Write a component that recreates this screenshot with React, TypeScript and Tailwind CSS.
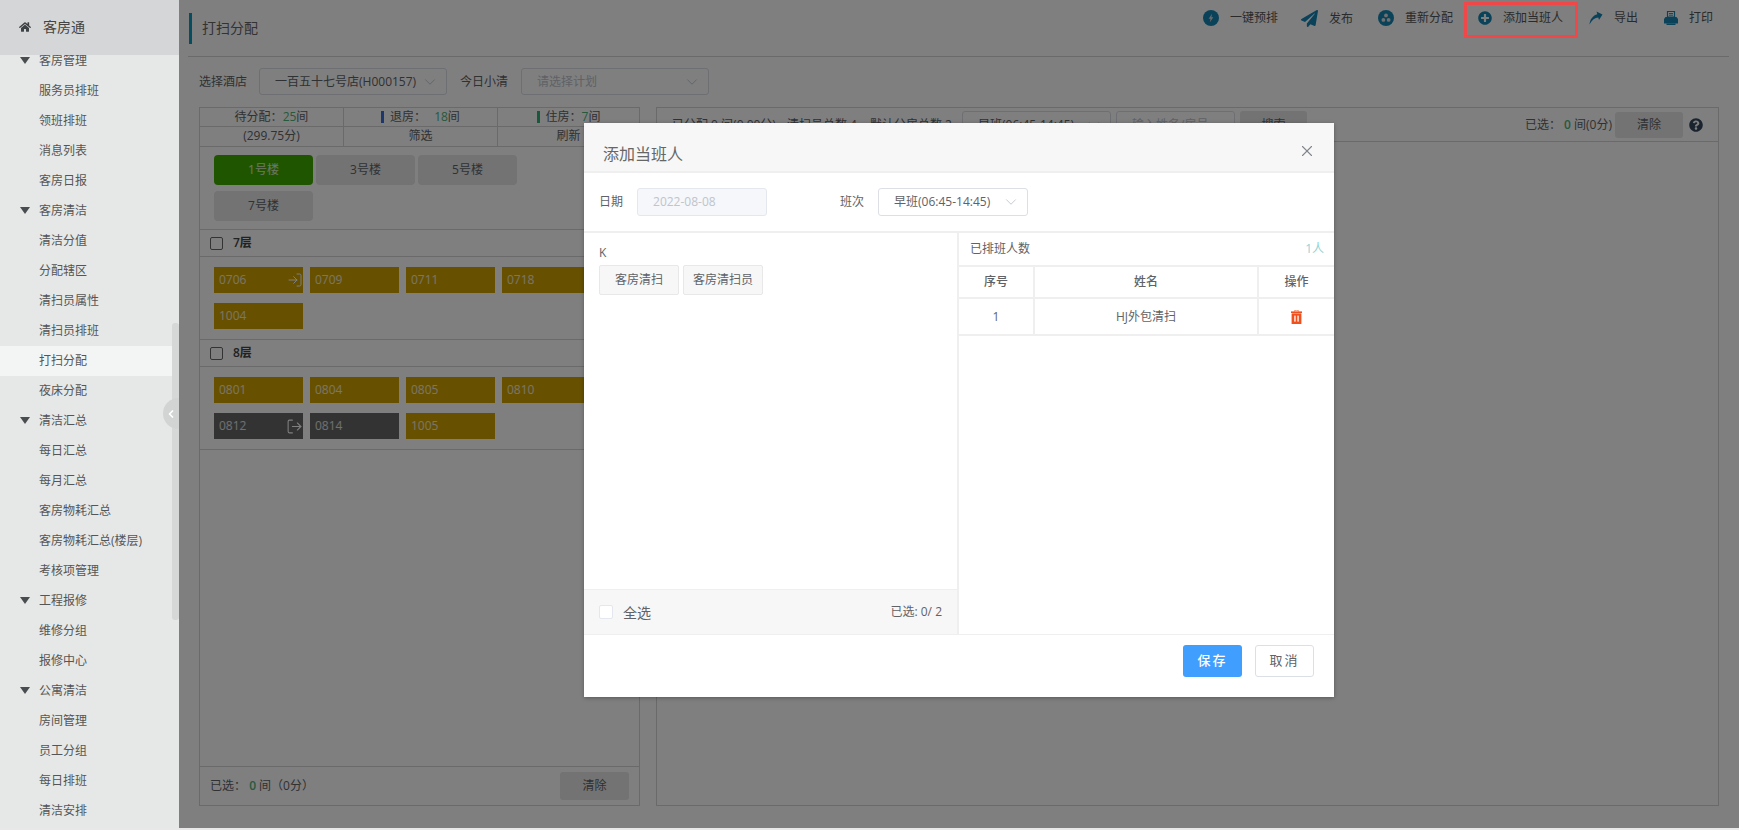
import React from "react";
import { ChevronDown, ChevronLeft, LogIn, LogOut, X } from "lucide-react";
import { FaHome, FaPaperPlane, FaPlusCircle, FaQuestionCircle } from "react-icons/fa";

type NavItem = { label: string; group?: boolean; active?: boolean };

const nav: NavItem[] = [
  { label: "客房管理", group: true },
  { label: "服务员排班" },
  { label: "领班排班" },
  { label: "消息列表" },
  { label: "客房日报" },
  { label: "客房清洁", group: true },
  { label: "清洁分值" },
  { label: "分配辖区" },
  { label: "清扫员属性" },
  { label: "清扫员排班" },
  { label: "打扫分配", active: true },
  { label: "夜床分配" },
  { label: "清洁汇总", group: true },
  { label: "每日汇总" },
  { label: "每月汇总" },
  { label: "客房物耗汇总" },
  { label: "客房物耗汇总(楼层)" },
  { label: "考核项管理" },
  { label: "工程报修", group: true },
  { label: "维修分组" },
  { label: "报修中心" },
  { label: "公寓清洁", group: true },
  { label: "房间管理" },
  { label: "员工分组" },
  { label: "每日排班" },
  { label: "清洁安排" },
];

function Caret() {
  return (
    <svg width="10" height="7" viewBox="0 0 10 7" className="absolute left-[20px] top-[11px]">
      <polygon points="0,0 10,0 5,7" fill="#4a4d50" />
    </svg>
  );
}

function Sidebar() {
  return (
    <aside className="relative w-[179px] h-[828px] shrink-0 bg-[#e6e8e8] flex flex-col overflow-hidden">
      <div className="relative z-10 h-[55px] shrink-0 bg-[#d5d6d7] flex items-center pl-[19px] text-[#444]">
        <FaHome size={12} className="text-[#3f4245] -mt-[1px]" />
        <span className="ml-[12px] text-[14px] -mt-[2px]">客房通</span>
      </div>
      <ul className="-mt-[9px] flex-1 text-[12px] text-[#555]">
        {nav.map((n) => (
          <li
            key={n.label}
            className={`relative h-[30px] leading-[30px] pl-[39px] ${n.active ? "bg-[#f3f4f4]" : ""}`}
          >
            {n.group && <Caret />}
            {n.label}
          </li>
        ))}
      </ul>
      <div className="absolute right-0 top-[323px] w-[7px] h-[297px] rounded-[3px] bg-[#d6d8d8]" />
      <div className="absolute right-0 top-[398px] w-[16px] h-[31px] rounded-l-full bg-[#d2d4d4] flex items-center justify-center">
        <ChevronLeft size={12} strokeWidth={3.5} className="text-white" />
      </div>
    </aside>
  );
}

function BoltIcon() {
  return (
    <svg width="16" height="16" viewBox="0 0 17 17">
      <circle cx="8.5" cy="8.5" r="8.5" fill="#1585b5" />
      <path d="M9.6 4 L6 9.2 H8 L7.3 13 L11 7.6 H8.9 Z" fill="#d6d6d6" />
    </svg>
  );
}

function ClusterIcon() {
  return (
    <svg width="16" height="16" viewBox="0 0 17 17">
      <circle cx="8.5" cy="8.5" r="8.5" fill="#1585b5" />
      <circle cx="8.5" cy="5.8" r="2" fill="#e0e0e0" />
      <circle cx="5.7" cy="10.6" r="2" fill="#e0e0e0" />
      <circle cx="11.3" cy="10.6" r="2" fill="#e0e0e0" />
    </svg>
  );
}

function ShareIcon() {
  return (
    <svg width="15" height="14" viewBox="0 0 14 14">
      <path d="M8 0.5 L14 3.5 L10.5 9 L9.8 6.6 C6.5 6.8 3.5 9 1 13.5 C1.3 8.5 4.5 4.2 8.8 3.2 Z" fill="#1585b5" />
    </svg>
  );
}

function PrinterIcon() {
  return (
    <svg width="14" height="14" viewBox="0 0 14 14">
      <path d="M3.5 0.5 H10.5 V6 H3.5 Z" fill="none" stroke="#1585b5" strokeWidth="1.2" />
      <path d="M5 2.5 H9 M5 4.2 H9" stroke="#1585b5" strokeWidth="0.9" />
      <path d="M1.5 6 H12.5 L14 8 V12.5 H0 V8 Z" fill="#1585b5" />
      <rect x="2.5" y="12.5" width="9" height="1.5" fill="#1585b5" />
    </svg>
  );
}

function TrashIcon() {
  return (
    <svg width="11" height="14" viewBox="0 0 11 14">
      <path d="M3.5 1.4 C3.5 0.4 4 0 5.5 0 C7 0 7.5 0.4 7.5 1.4" fill="none" stroke="#f0501e" strokeWidth="0.9" />
      <rect x="0" y="1.4" width="11" height="1.6" fill="#f0501e" />
      <rect x="0.6" y="3.4" width="9.8" height="10.6" fill="#f0501e" />
      <rect x="3.3" y="5.6" width="1.3" height="6" fill="#fff" />
      <rect x="6.4" y="5.6" width="1.3" height="6" fill="#fff" />
    </svg>
  );
}

function ToolItem({ icon, label, iconW, ml }: { icon: React.ReactNode; label: string; iconW: string; ml: string }) {
  return (
    <div className={`flex items-center ${ml}`}>
      <span className={`flex justify-center ${iconW}`}>{icon}</span>
      <span className="ml-[11px]">{label}</span>
    </div>
  );
}

function Toolbar() {
  return (
    <div className="flex items-start pt-[10px] text-[12px] text-[#555] leading-[16px]">
      <ToolItem icon={<BoltIcon />} label="一键预排" iconW="w-[16px]" ml="" />
      <ToolItem icon={<FaPaperPlane size={17} color="#1585b5" />} label="发布" iconW="w-[17px]" ml="ml-[23px]" />
      <ToolItem icon={<ClusterIcon />} label="重新分配" iconW="w-[16px]" ml="ml-[25px]" />
      <ToolItem icon={<FaPlusCircle size={14} color="#1585b5" />} label="添加当班人" iconW="w-[14px]" ml="ml-[25px]" />
      <ToolItem icon={<ShareIcon />} label="导出" iconW="w-[15px]" ml="ml-[25px]" />
      <ToolItem icon={<PrinterIcon />} label="打印" iconW="w-[14px]" ml="ml-[26px]" />
    </div>
  );
}

function SelectBox({ text, w, muted, className = "" }: { text: string; w: string; muted?: boolean; className?: string }) {
  return (
    <div
      className={`flex items-center justify-between h-[27px] rounded-[3px] border border-[#dcdfe6] pl-[15px] pr-[7px] ${w} ${className} ${
        muted ? "text-[#c0c4cc]" : "text-[#606266]"
      }`}
    >
      <span className="whitespace-nowrap">{text}</span>
      <ChevronDown size={18} strokeWidth={1} className="text-[#b4b8c0] shrink-0" />
    </div>
  );
}

function Room({ no, dark, icon }: { no: string; dark?: boolean; icon?: "in" | "out" }) {
  return (
    <div
      className={`relative w-[89px] h-[26px] flex items-center pl-[5px] text-[12px] text-white/80 ${
        dark ? "bg-[#666]" : "bg-[#cfa000]"
      }`}
    >
      {no}
      {icon === "in" && <LogIn size={16} strokeWidth={1.5} className="absolute right-0 top-[5px] text-white" />}
      {icon === "out" && <LogOut size={17} strokeWidth={1.5} className="absolute right-0 top-[5px] text-white" />}
    </div>
  );
}

function FloorHeader({ name }: { name: string }) {
  return (
    <div className="h-[27px] flex items-center pl-[10px] border-b border-[#d4d4d4]">
      <span className="w-[13px] h-[13px] rounded-[2px] border border-[#666] bg-white" />
      <span className="ml-[10px] font-semibold text-[12px] text-[#444]">{name}</span>
    </div>
  );
}

function LeftPanel() {
  return (
    <section className="w-[441px] h-[699px] shrink-0 border border-[#d4d4d4] flex flex-col text-[12px] text-[#606266]">
      <div className="grid grid-cols-[144px_154px_1fr] text-center leading-[18px] border-b border-[#d4d4d4]">
        <div className="h-[19px] border-b border-r border-[#d4d4d4]">
          待分配：<span className="text-[#4fb27a]">25</span>间
        </div>
        <div className="h-[19px] border-b border-r border-[#d4d4d4]">
          <span className="inline-block w-[3px] h-[12px] mr-[6px] align-[-2px] bg-[#3a6fd8]" />
          退房：<span className="ml-[8px] text-[#4fb27a]">18</span>间
        </div>
        <div className="h-[19px] border-b border-[#d4d4d4]">
          <span className="inline-block w-[3px] h-[12px] mr-[6px] align-[-2px] bg-[#2fb27a]" />
          住房：<span className="text-[#4fb27a]">7</span>间
        </div>
        <div className="h-[19px] border-r border-[#d4d4d4]">(299.75分)</div>
        <div className="h-[19px] border-r border-[#d4d4d4]">筛选</div>
        <div className="h-[19px]">刷新</div>
      </div>
      <div className="flex flex-wrap gap-x-[3px] gap-y-[6px] pl-[14px] pr-[100px] pt-[8px] pb-[8px] border-b border-[#d4d4d4]">
        <div className="w-[99px] h-[30px] rounded-[4px] bg-[#40ab00] text-white/80 flex items-center justify-center">1号楼</div>
        <div className="w-[99px] h-[30px] rounded-[4px] bg-[#e6e6e6] flex items-center justify-center">3号楼</div>
        <div className="w-[99px] h-[30px] rounded-[4px] bg-[#e6e6e6] flex items-center justify-center">5号楼</div>
        <div className="w-[99px] h-[30px] rounded-[4px] bg-[#e6e6e6] flex items-center justify-center">7号楼</div>
      </div>
      <FloorHeader name="7层" />
      <div className="flex flex-wrap gap-x-[7px] gap-y-[10px] pl-[14px] pt-[10px] pb-[10px] border-b border-[#d4d4d4]">
        <Room no="0706" icon="in" />
        <Room no="0709" />
        <Room no="0711" />
        <Room no="0718" />
        <Room no="1004" />
      </div>
      <FloorHeader name="8层" />
      <div className="flex flex-wrap gap-x-[7px] gap-y-[10px] pl-[14px] pt-[10px] pb-[10px] border-b border-[#d4d4d4]">
        <Room no="0801" />
        <Room no="0804" />
        <Room no="0805" />
        <Room no="0810" />
        <Room no="0812" dark icon="out" />
        <Room no="0814" dark />
        <Room no="1005" />
      </div>
      <div className="flex-1" />
      <div className="h-[39px] border-t border-[#d4d4d4] flex items-center justify-between pl-[10px] pr-[10px]">
        <span>
          已选： <span className="text-[#4fb27a] font-semibold">0</span> 间（0分）
        </span>
        <div className="w-[69px] h-[28px] rounded-[3px] bg-[#e6e6e6] flex items-center justify-center">清除</div>
      </div>
    </section>
  );
}

function RightPanel() {
  return (
    <section className="w-[1063px] h-[699px] shrink-0 border border-[#d4d4d4] text-[12px] text-[#606266]">
      <div className="h-[34px] border-b border-[#d4d4d4] flex items-center pl-[15px] pr-[15px]">
        <span className="w-[115px] whitespace-nowrap">已分配 0 间(0.00分)</span>
        <span className="w-[83px] whitespace-nowrap">清扫员总数 4</span>
        <span className="w-[92px] whitespace-nowrap">默认分房总数 2</span>
        <SelectBox text="早班(06:45-14:45)" w="w-[149px]" />
        <div className="ml-[5px] w-[119px] h-[27px] rounded-[3px] border border-[#dcdfe6] pl-[15px] leading-[25px] text-[#c0c4cc]">输入姓名/房号</div>
        <div className="ml-[5px] w-[67px] h-[27px] rounded-[3px] bg-[#e6e6e6] flex items-center justify-center">搜索</div>
        <div className="ml-auto flex items-center">
          <span className="whitespace-nowrap">
            已选： <span className="text-[#4fb27a] font-semibold">0</span> 间(0分)
          </span>
          <div className="ml-[3px] w-[68px] h-[26px] rounded-[3px] bg-[#e6e6e6] flex items-center justify-center">清除</div>
          <FaQuestionCircle size={14} color="#34495e" className="ml-[6px]" />
        </div>
      </div>
    </section>
  );
}

function Modal() {
  return (
    <div className="absolute left-[405px] top-[123px] w-[750px] h-[574px] bg-white flex flex-col text-[12px] text-[#606266] shadow-[0_1px_4px_rgba(0,0,0,0.3)]">
      <div className="h-[50px] shrink-0 bg-[#f7f7f7] border-b-2 border-[#efefef] flex justify-between pl-[19px] pr-[18px]">
        <span className="text-[16px] text-[#666] pt-[19px] leading-[24px]">添加当班人</span>
        <X size={18} strokeWidth={1.5} className="text-[#80858c] mt-[19px]" />
      </div>
      <div className="h-[60px] shrink-0 border-b-2 border-[#efefef] flex items-center pl-[15px]">
        <span>日期</span>
        <div className="ml-[14px] w-[130px] h-[28px] rounded-[3px] bg-[#f5f7fa] border border-[#e4e7ed] pl-[15px] leading-[26px] text-[#c0c4cc]">
          2022-08-08
        </div>
        <span className="ml-[73px]">班次</span>
        <div className="ml-[14px] w-[150px] h-[28px] rounded-[3px] border border-[#dcdfe6] pl-[15px] pr-[7px] flex items-center justify-between">
          <span className="whitespace-nowrap">早班(06:45-14:45)</span>
          <ChevronDown size={18} strokeWidth={1} className="text-[#b4b8c0]" />
        </div>
      </div>
      <div className="flex-1 flex min-h-0">
        <div className="w-[375px] shrink-0 border-r-2 border-[#efefef] flex flex-col">
          <div className="flex-1 pl-[15px] pt-[12px]">
            <div className="leading-[16px]">K</div>
            <div className="mt-[4px] flex gap-[4px]">
              <div className="w-[80px] h-[30px] bg-[#f7f7f7] border border-[#e8e8e8] rounded-[2px] flex items-center justify-center">客房清扫</div>
              <div className="w-[80px] h-[30px] bg-[#f7f7f7] border border-[#e8e8e8] rounded-[2px] flex items-center justify-center">客房清扫员</div>
            </div>
          </div>
          <div className="h-[45px] shrink-0 bg-[#f7f7f7] border-t border-[#efefef] flex items-center justify-between pl-[15px] pr-[15px]">
            <div className="flex items-center">
              <span className="w-[14px] h-[14px] rounded-[2px] bg-white border border-[#e4e7ed]" />
              <span className="ml-[10px] text-[14px]">全选</span>
            </div>
            <span>已选: 0/ 2</span>
          </div>
        </div>
        <div className="flex-1 flex flex-col">
          <div className="h-[32px] shrink-0 flex items-center justify-between pl-[11px] pr-[10px]">
            <span>已排班人数</span>
            <span className="text-[#8ed4d8]">1人</span>
          </div>
          <div className="grid grid-cols-[76px_224px_1fr] text-center border-t-2 border-[#efefef]">
            <div className="h-[32px] flex items-center justify-center font-medium border-r-2 border-b-2 border-[#efefef]">序号</div>
            <div className="h-[32px] flex items-center justify-center font-medium border-r-2 border-b-2 border-[#efefef]">姓名</div>
            <div className="h-[32px] flex items-center justify-center font-medium border-b-2 border-[#efefef]">操作</div>
            <div className="h-[37px] flex items-center justify-center border-r-2 border-b-2 border-[#efefef]">1</div>
            <div className="h-[37px] flex items-center justify-center border-r-2 border-b-2 border-[#efefef]">HJ外包清扫</div>
            <div className="h-[37px] flex items-center justify-center border-b-2 border-[#efefef]">
              <TrashIcon />
            </div>
          </div>
        </div>
      </div>
      <div className="h-[63px] shrink-0 border-t border-[#efefef] flex items-start justify-end pt-[10px] pr-[20px] gap-[13px]">
        <div className="w-[59px] h-[32px] rounded-[3px] bg-[#409eff] text-white text-[13px] tracking-[2px] flex items-center justify-center font-medium">保存</div>
        <div className="w-[59px] h-[32px] rounded-[3px] border border-[#dcdfe6] text-[13px] tracking-[2px] flex items-center justify-center">取消</div>
      </div>
    </div>
  );
}

export default function App() {
  return (
    <div
      className="w-[1739px] h-[830px] overflow-hidden flex bg-[#e8e8e8]"
      style={{ fontFamily: '"Open Sans","Noto Sans CJK SC",sans-serif' }}
    >
      <Sidebar />
      <main className="relative flex-1 h-[828px] bg-white">
        <header className="h-[57px] ml-[9px] mr-[10px] border-b border-[#d4d4d4] flex justify-between">
          <div className="flex items-center pl-[1px] h-[56px]">
            <span className="w-[3px] h-[31px] bg-[#0e9ac0]" />
            <span className="ml-[10px] text-[14px] text-[#666] -mt-[2px]">打扫分配</span>
          </div>
          <div className="pr-[16px]">
            <Toolbar />
          </div>
        </header>
        <div className="pl-[20px] pt-[11px] flex items-center text-[12px] text-[#606266]">
          <span>选择酒店</span>
          <SelectBox text="一百五十七号店(H000157)" w="w-[188px]" className="ml-[12px]" />
          <span className="ml-[13px]">今日小清</span>
          <SelectBox text="请选择计划" w="w-[188px]" muted className="ml-[13px]" />
        </div>
        <div className="pl-[20px] pt-[12px] flex gap-[16px]">
          <LeftPanel />
          <RightPanel />
        </div>
        <div className="absolute inset-0 bg-black/50" />
        <div className="absolute left-[1285px] top-[2px] w-[114px] h-[36px] border-[3px] border-[#f04848]" />
        <Modal />
      </main>
    </div>
  );
}
